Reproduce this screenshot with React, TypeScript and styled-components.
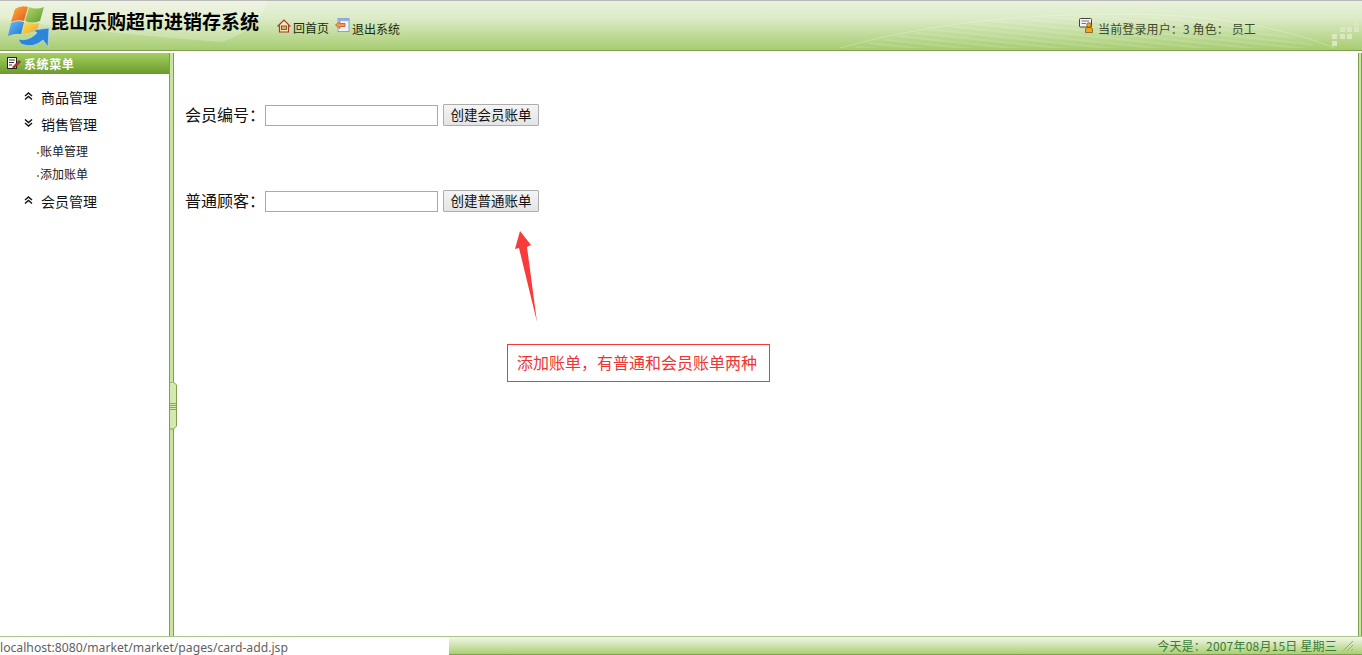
import React from "react";
import styled, { createGlobalStyle } from "styled-components";

const Global = createGlobalStyle`
  html, body { margin: 0; padding: 0; height: 100%; overflow: hidden; background: #fff; }
  body { font-family: "Liberation Sans", "Noto Sans CJK SC", sans-serif; font-size: 12px; color: #000; }
`;

const Page = styled.div`
  position: relative;
  width: 1362px;
  height: 655px;
  display: flex;
  flex-direction: column;
  overflow: hidden;
`;

const Header = styled.header`
  position: relative;
  flex: none;
  height: 50px;
  box-sizing: border-box;
  border-top: 1px solid #b9bab5;
  display: flex;
  align-items: flex-start;
  background: linear-gradient(#e9f1dc 0%, #dcebc6 35%, #a6cc70 100%);
  overflow: hidden;
`;

const HeaderArt = styled.svg`
  position: absolute;
  left: 0;
  top: 0;
  width: 1362px;
  height: 49px;
`;

const Brand = styled.div`
  position: relative;
  display: flex;
  align-items: flex-start;
  flex: none;
  margin-left: 8px;
  width: 269px;
`;

const BrandName = styled.h1`
  margin: 7px 0 0 -2px;
  font: bold 19px/26px "Noto Sans CJK SC", sans-serif;
  white-space: nowrap;
  color: #000;
`;

const HeaderNav = styled.nav`
  position: relative;
  display: flex;
  align-items: flex-start;
  gap: 6px;
  padding-top: 17px;
`;

const NavLink = styled.a<{ $drop?: number }>`
  display: flex;
  align-items: flex-start;
  gap: 2px;
  font: 12px/20px "Noto Sans CJK SC", sans-serif;
  color: #1b2a0c;
  white-space: nowrap;
  svg { margin-top: ${(p) => (p.$drop ? 0 : 1)}px; flex: none; }
  span { margin-top: ${(p) => p.$drop ?? 0}px; }
`;

const UserInfo = styled.div`
  position: relative;
  margin-left: auto;
  margin-right: 106px;
  padding-top: 17px;
  display: flex;
  align-items: flex-start;
  gap: 4px;
  font: 12px/20px "Noto Sans CJK SC", sans-serif;
  letter-spacing: 0.13px;
  color: #3b4a30;
  white-space: pre;
  span { margin-top: 1px; }
`;

const Rule = styled.div`
  flex: none;
  height: 3px;
  background: #fff;
  border-top: 1px solid #7f9f4d;
  box-sizing: border-box;
`;

const Body = styled.div`
  flex: 1;
  min-height: 0;
  display: flex;
`;

const Sidebar = styled.aside`
  flex: none;
  width: 169px;
  display: flex;
  flex-direction: column;
`;

const SideTitle = styled.div`
  flex: none;
  height: 21px;
  display: flex;
  align-items: center;
  gap: 3px;
  padding-left: 7px;
  background: linear-gradient(#a3d060, #6b9a2c);
  color: #fff;
  font: bold 12px/19px "Noto Sans CJK SC", sans-serif;
  letter-spacing: 0.6px;
`;

const Menu = styled.ul`
  list-style: none;
  margin: 0;
  padding: 9px 0 0 24px;
`;

const MenuGroup = styled.li`
  display: flex;
  align-items: center;
  gap: 8px;
  height: 27px;
  font: 14px/20px "Noto Sans CJK SC", sans-serif;
  color: #111;
`;

const SubMenu = styled.ul`
  list-style: none;
  margin: 2px 0 2px;
  padding: 0 0 0 13px;
`;

const SubItem = styled.li`
  height: 23px;
  font: 12px/23px "Noto Sans CJK SC", sans-serif;
  color: #1a1a2a;
  &::before {
    content: "";
    display: inline-block;
    width: 2px;
    height: 2px;
    margin-right: 1px;
    vertical-align: middle;
    background: #8a9a50;
  }
`;

const Splitter = styled.div`
  position: relative;
  flex: none;
  width: 5px;
  box-sizing: border-box;
  background: #c9e3a0;
  border-left: 1px solid #7f9f4d;
  border-right: 1px solid #7f9f4d;
`;

const SplitterHandle = styled.svg`
  position: absolute;
  left: -1px;
  top: 329px;
`;

const Content = styled.main`
  flex: 1;
  padding: 51px 0 0 11px;
`;

const FormRow = styled.div`
  display: flex;
  align-items: center;
  height: 22px;
  margin-bottom: 64px;
`;

const FormLabel = styled.label`
  width: 80px;
  flex: none;
  font: 16px/20px "Noto Sans CJK SC", sans-serif;
  padding-bottom: 3px;
  color: #111;
`;

const TextInput = styled.input`
  flex: none;
  width: 173px;
  height: 21px;
  box-sizing: border-box;
  border: 1px solid #a9a9a9;
  background: #fff;
  margin: 1px 5px 0 0;
  padding: 0;
`;

const ActionButton = styled.button`
  flex: none;
  width: 96px;
  height: 22px;
  padding: 0 0 3px;
  box-sizing: border-box;
  border: 1px solid #adadad;
  background: linear-gradient(#f4f4f4, #e4e4e4);
  border-radius: 1px;
  font: 13.5px/18px "Noto Sans CJK SC", sans-serif;
  color: #111;
`;

const RightEdge = styled.div`
  flex: none;
  width: 4px;
  box-sizing: border-box;
  border-left: 1px solid #7f9f4d;
  border-right: 1px solid #7f9f4d;
  background: #c9e3a0;
`;

const ArrowMark = styled.svg`
  position: absolute;
  left: 514px;
  top: 230px;
`;

const Callout = styled.div`
  position: absolute;
  left: 507px;
  top: 344px;
  width: 263px;
  height: 38px;
  box-sizing: border-box;
  border: 1px solid #f03a3a;
  padding-left: 9px;
  color: #ee3535;
  font: 16px/34px "Noto Sans CJK SC", sans-serif;
  white-space: nowrap;
`;

const Footer = styled.footer`
  flex: none;
  height: 19px;
  box-sizing: border-box;
  border-top: 1px solid #a9c58a;
  border-bottom: 1px solid #7f9f4d;
  display: flex;
  justify-content: flex-end;
  align-items: center;
  gap: 5px;
  padding-right: 8px;
  background: linear-gradient(#f2f7ea, #a9d071);
  font: 12px/18px "Noto Sans CJK SC", sans-serif;
  letter-spacing: 0.2px;
  color: #3a7d3a;
`;

const StatusTip = styled.div`
  position: absolute;
  left: 0;
  bottom: 0;
  width: 449px;
  height: 18px;
  box-sizing: border-box;
  background: #fff;
  border-radius: 0 3px 0 0;
  color: #5f5f5f;
  font: 12.2px/21px "Noto Sans", "Open Sans", sans-serif;
  overflow: hidden;
  white-space: nowrap;
`;

const LogoIcon = () => (
  <svg width="44" height="44" viewBox="0 0 44 44" style={{ flex: "none", marginTop: 3 }}>
    <defs>
      <linearGradient id="paneRed" x1="0" y1="0" x2="1" y2="1">
        <stop offset="0" stopColor="#f7b53a" />
        <stop offset="1" stopColor="#e8501f" />
      </linearGradient>
      <linearGradient id="paneGreen" x1="0" y1="0" x2="1" y2="1">
        <stop offset="0" stopColor="#b6d86a" />
        <stop offset="1" stopColor="#5f9a2e" />
      </linearGradient>
      <linearGradient id="paneBlue" x1="0" y1="0" x2="1" y2="1">
        <stop offset="0" stopColor="#6cc0f2" />
        <stop offset="1" stopColor="#1a6fd0" />
      </linearGradient>
      <linearGradient id="paneYellow" x1="0" y1="0" x2="1" y2="1">
        <stop offset="0" stopColor="#fbe05a" />
        <stop offset="1" stopColor="#f2a420" />
      </linearGradient>
    </defs>
    <path d="M7 5 Q13 1 20 3 L16 17 Q10 15 3 18 Z" fill="url(#paneRed)" />
    <path d="M21 3 Q28 6 36 3 L32 17 Q24 20 17 17 Z" fill="url(#paneGreen)" />
    <path d="M3 19 Q9 16 16 18 L13 30 Q7 29 0 32 Z" fill="url(#paneBlue)" />
    <path d="M17 18 Q24 21 31 19 L29 27 L19 29 L14 30 Z" fill="url(#paneYellow)" />
    <path d="M10 35 Q20 38 29 29 L26 26 L41 24 L40 43 L35 36 Q25 45 13 40 Z" fill="#2c86d8" stroke="#bfe0f7" strokeWidth="0.6" />
  </svg>
);

const HomeIcon = () => (
  <svg width="14" height="14" viewBox="0 0 14 14">
    <path d="M1 7 L7 1 L13 7 L11.5 7 L11.5 13 L2.5 13 L2.5 7 Z" fill="#f4e7cf" stroke="#a8342a" strokeWidth="1.2" />
    <rect x="4.5" y="7" width="5" height="3.5" fill="#e9b43a" stroke="#6b3a1e" strokeWidth="0.8" />
  </svg>
);

const ExitIcon = () => (
  <svg width="15" height="15" viewBox="0 0 15 15">
    <rect x="3" y="0.5" width="11" height="13" fill="#eef3fa" stroke="#86a4cc" />
    <rect x="3" y="0.5" width="11" height="2.5" fill="#8db0dd" />
    <path d="M0.5 7 L5 3.5 L5 5.5 L10 5.5 L10 8.5 L5 8.5 L5 10.5 Z" fill="#f39a4c" stroke="#c8551e" strokeWidth="0.8" />
  </svg>
);

const UserIcon = () => (
  <svg width="15" height="15" viewBox="0 0 15 15" style={{ flex: "none" }}>
    <rect x="0.5" y="0.5" width="12" height="8.5" rx="1" fill="#f4f4f4" stroke="#444" />
    <path d="M2.5 3 H10 M2.5 5.5 H7" stroke="#777" />
    <circle cx="10" cy="7" r="2.3" fill="#f4a414" stroke="#5a3a05" strokeWidth="0.6" />
    <path d="M6.5 14.5 V11.5 Q6.5 9.5 8.5 9.5 H11.5 Q13.5 9.5 13.5 11.5 V14.5 Z" fill="#f4a414" stroke="#5a3a05" strokeWidth="0.6" />
  </svg>
);

const EditIcon = () => (
  <svg width="14" height="13" viewBox="0 0 14 13" style={{ flex: "none" }}>
    <rect x="0.5" y="0.5" width="9" height="11" fill="#fff" stroke="#222" />
    <path d="M2 3 H8 M2 5.5 H7 M2 8 H5" stroke="#333" />
    <path d="M6 9.5 L12 3.5 L13.5 5 L7.5 11 L5.5 12 Z" fill="#d6302a" stroke="#2a1010" strokeWidth="0.5" />
  </svg>
);

const Chevrons = ({ down }: { down?: boolean }) => (
  <svg width="9" height="8" viewBox="0 0 9 8" style={{ flex: "none", marginTop: -2, transform: down ? "scaleY(-1)" : undefined }}>
    <path d="M1 4 L4.5 1 L8 4 M1 7.5 L4.5 4.5 L8 7.5" fill="none" stroke="#111" strokeWidth="1.4" />
  </svg>
);

const Grip = () => (
  <svg width="12" height="12" viewBox="0 0 12 12" style={{ flex: "none" }}>
    <path d="M1 11 L11 1 M5 11 L11 5 M9 11 L11 9" stroke="#9aa88a" strokeWidth="1" />
  </svg>
);

const Dots = [
  [1332, 33], [1332, 40], [1340, 26], [1340, 33], [1347, 26], [1347, 33], [1354, 20], [1354, 26],
];

const App = () => (
  <Page>
    <Global />
    <Header>
      <HeaderArt viewBox="0 0 1362 49">
        <defs>
          <pattern id="stripes" width="9" height="5" patternUnits="userSpaceOnUse" patternTransform="rotate(6)">
            <path d="M0 1 H9" stroke="#ffffff" strokeOpacity="0.24" />
          </pattern>
        </defs>
        <path d="M0 0 H268 Q262 26 222 41 Q110 33 0 18 Z" fill="#ffffff" fillOpacity="0.22" />
        <path d="M850 47 Q960 15 1120 15 Q1250 15 1320 47 Z" fill="url(#stripes)" />
        <path d="M840 47 Q960 13 1120 13 Q1250 13 1335 47" fill="none" stroke="#ffffff" strokeOpacity="0.25" />
        {Dots.map(([x, y]) => (
          <rect key={`${x}-${y}`} x={x} y={y} width="5" height="5" fill="#d9e8c1" />
        ))}
      </HeaderArt>
      <Brand>
        <LogoIcon />
        <BrandName>昆山乐购超市进销存系统</BrandName>
      </Brand>
      <HeaderNav>
        <NavLink>
          <HomeIcon />
          <span>回首页</span>
        </NavLink>
        <NavLink $drop={1}>
          <ExitIcon />
          <span>退出系统</span>
        </NavLink>
      </HeaderNav>
      <UserInfo>
        <UserIcon />
        <span>当前登录用户：3 角色： 员工</span>
      </UserInfo>
    </Header>
    <Rule />
    <Body>
      <Sidebar>
        <SideTitle>
          <EditIcon />
          系统菜单
        </SideTitle>
        <Menu>
          <MenuGroup>
            <Chevrons />
            商品管理
          </MenuGroup>
          <MenuGroup>
            <Chevrons down />
            销售管理
          </MenuGroup>
          <SubMenu>
            <SubItem>账单管理</SubItem>
            <SubItem>添加账单</SubItem>
          </SubMenu>
          <MenuGroup>
            <Chevrons />
            会员管理
          </MenuGroup>
        </Menu>
      </Sidebar>
      <Splitter>
        <SplitterHandle width="9" height="48" viewBox="0 0 9 48">
          <path d="M0.5 0 H4.5 L7.5 3 V44 L4.5 47 H0.5 Z" fill="#d3e9ae" stroke="#7f9f4d" />
          <path d="M1 21.5 H7 M1 23.5 H7 M1 25.5 H7 M1 27.5 H7" stroke="#8fa86a" />
        </SplitterHandle>
      </Splitter>
      <Content>
        <FormRow>
          <FormLabel>会员编号：</FormLabel>
          <TextInput />
          <ActionButton>创建会员账单</ActionButton>
        </FormRow>
        <FormRow>
          <FormLabel>普通顾客：</FormLabel>
          <TextInput />
          <ActionButton>创建普通账单</ActionButton>
        </FormRow>
      </Content>
      <RightEdge />
    </Body>
    <Footer>
      今天是：2007年08月15日 星期三
      <Grip />
    </Footer>
    <ArrowMark width="26" height="94" viewBox="0 0 26 94">
      <path d="M6 1 L17 15 L13 17 L23 92 L5 18 L1 19 Z" fill="#f93b3b" />
    </ArrowMark>
    <Callout>添加账单，有普通和会员账单两种</Callout>
    <StatusTip>localhost:8080/market/market/pages/card-add.jsp</StatusTip>
  </Page>
);

export default App;
